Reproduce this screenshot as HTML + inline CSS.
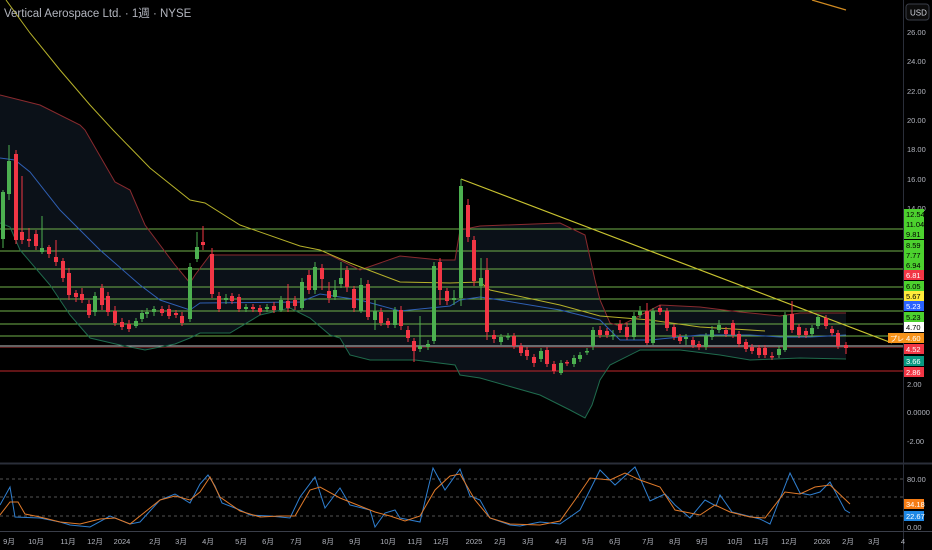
<!DOCTYPE html>
<html><head><meta charset="utf-8"><style>
html,body{margin:0;padding:0;background:#000;}
body{width:932px;height:550px;overflow:hidden;position:relative;font-family:"Liberation Sans","Noto Sans CJK JP",sans-serif;}
svg{position:absolute;left:0;top:0;}
text{font-family:"Liberation Sans","Noto Sans CJK JP",sans-serif;}
</style></head><body>
<svg id="s" width="932" height="550" viewBox="0 0 932 550" xmlns="http://www.w3.org/2000/svg">
<rect width="932" height="550" fill="#000"/>
<g id="bg"></g>
<g id="c"></g>
<g id="ov"></g>
</svg>
<script>
var NS="http://www.w3.org/2000/svg";
function el(p,t,a,txt){var e=document.createElementNS(NS,t);for(var k in a)e.setAttribute(k,a[k]);if(txt!=null)e.textContent=txt;document.getElementById(p).appendChild(e);return e;}
function pl(pts){return pts.map(function(p){return p[0]+","+p[1]}).join(" ");}
var upper=[[0,95],[40,105],[80,125],[85,130],[115,182],[130,190],[145,225],[175,265],[190,283],[195,275],[210,255],[300,255],[330,255],[360,270],[400,256],[440,260],[455,260],[460,230],[480,226],[560,223],[585,235],[595,280],[600,300],[610,323],[620,326],[660,305],[700,307],[740,312],[780,316],[800,313],[846,313]];
var lower=[[0,223],[10,227],[20,250],[50,285],[70,315],[90,338],[120,345],[145,350],[175,344],[190,338],[200,333],[230,333],[260,315],[290,308],[310,318],[330,335],[340,338],[350,355],[370,360],[415,360],[455,365],[460,375],[480,378],[540,395],[570,410],[585,418],[592,405],[600,380],[610,365],[640,350],[680,350],[720,355],[750,360],[800,358],[846,359]];
el("bg","polygon",{points:pl(upper.concat(lower.slice().reverse())),fill:"#0b1118"});
[229,251,269,287,299,311,324,336].forEach(function(y){el("bg","line",{x1:0,y1:y,x2:903,y2:y,stroke:"#6fb04a","stroke-width":1});});
el("bg","line",{x1:0,y1:346,x2:903,y2:346,stroke:"#c9c9c9","stroke-width":1});
el("bg","line",{x1:0,y1:347.5,x2:903,y2:347.5,stroke:"#5a1a1a","stroke-width":1});
el("bg","line",{x1:0,y1:371,x2:903,y2:371,stroke:"#c0272d","stroke-width":1});
el("bg","polyline",{points:pl(upper),fill:"none",stroke:"#8a2a2e","stroke-width":1});
el("bg","polyline",{points:pl(lower),fill:"none",stroke:"#1f6b4d","stroke-width":1});
el("bg","polyline",{points:pl([[0,158],[15,160],[30,172],[60,210],[100,250],[140,285],[160,300],[190,310],[200,303],[300,302],[320,294],[360,300],[400,311],[450,306],[460,300],[480,297],[500,300],[560,310],[600,320],[620,340],[650,340],[700,335],[750,335],[780,337],[810,337],[846,335]]),fill:"none",stroke:"#2f5fb3","stroke-width":1});
el("bg","polyline",{points:pl([[6,0],[30,33],[60,70],[90,105],[113,130],[150,168],[190,200],[205,203],[240,225],[300,246],[320,250],[350,263],[400,282],[450,283],[480,282],[490,290],[560,305],[600,316],[650,320],[700,327],[750,330],[765,331]]),fill:"none",stroke:"#b5b02a","stroke-width":1});
el("bg","line",{x1:461,y1:179,x2:892,y2:343,stroke:"#c8c230","stroke-width":1.2});
el("bg","line",{x1:812,y1:0,x2:846,y2:10,stroke:"#d08a20","stroke-width":1.2});
var C=[[3,239,192,190,248],[9,194,161,145,200],[16,154,240,150,244],[22,232,240,176,244],[29,239,241,228,247],[36,234,246,230,250],[42,252,248,216,254],[49,247,254,245,258],[56,257,262,240,266],[63,261,278,258,282],[69,273,295,268,300],[76,293,297,290,302],[82,294,300,288,303],[89,304,315,300,318],[95,312,296,292,316],[102,288,305,284,310],[108,296,312,292,316],[115,311,323,306,326],[122,322,327,318,330],[129,324,329,320,332],[136,326,321,318,328],[142,319,313,310,322],[147,314,312,308,318],[154,312,309,306,316],[162,309,313,306,316],[169,309,316,305,319],[176,313,315,310,318],[182,316,323,312,326],[190,319,267,263,322],[197,259,247,232,262],[203,242,245,226,250],[212,254,294,248,298],[219,296,309,292,312],[226,300,298,294,304],[232,296,301,293,304],[239,297,309,294,312],[246,309,307,304,312],[253,307,309,304,312],[260,308,312,305,315],[267,309,307,304,312],[274,306,310,302,313],[281,310,300,296,312],[288,301,308,284,312],[295,300,306,296,310],[302,308,282,278,310],[309,275,290,270,294],[315,290,267,262,294],[322,268,279,264,290],[329,291,298,282,303],[335,297,290,280,300],[341,284,278,262,288],[347,270,287,266,292],[354,289,308,286,312],[361,311,285,278,313],[368,284,317,280,320],[375,320,311,300,330],[381,312,323,308,326],[388,321,325,318,328],[395,325,310,307,328],[401,310,326,306,330],[408,330,338,326,342],[414,341,351,338,362],[420,349,346,316,352],[428,347,344,340,350],[434,341,266,262,344],[440,262,290,258,305],[447,291,301,288,305],[454,300,298,290,305],[461,298,186,179,306],[468,205,237,199,242],[474,240,281,236,286],[481,286,278,258,300],[487,270,332,258,340],[494,335,339,330,343],[501,342,337,334,345],[508,337,336,333,340],[514,336,346,333,349],[521,346,353,343,356],[527,350,356,347,360],[534,357,363,354,367],[541,359,351,348,362],[547,350,364,347,367],[554,364,371,361,374],[561,373,363,360,375],[567,362,363,360,366],[574,364,358,355,367],[580,359,355,352,362],[587,352,351,348,355],[593,346,330,327,350],[600,330,335,326,338],[607,331,335,328,338],[613,336,335,330,340],[620,324,330,320,333],[627,327,337,323,340],[634,337,316,312,340],[640,315,311,306,318],[647,311,343,303,345],[653,343,311,308,345],[660,308,312,305,315],[667,311,328,308,331],[674,327,337,324,340],[680,337,341,334,344],[686,339,337,334,345],[693,340,345,337,348],[699,344,347,341,350],[706,347,336,333,350],[712,337,330,326,340],[719,330,325,320,333],[726,330,334,327,337],[733,323,335,320,338],[739,334,344,331,347],[746,342,349,339,352],[752,347,351,344,354],[759,348,355,345,358],[765,348,355,345,358],[772,356,357,352,360],[779,355,349,346,358],[785,350,315,312,352],[792,314,330,301,333],[799,327,335,324,338],[806,331,335,328,338],[812,334,328,325,337],[818,326,317,314,329],[826,318,326,315,329],[832,329,333,326,336],[838,333,346,330,349],[846,345,348,342,354]];
C.forEach(function(c){var g=c[2]<c[1];var col=g?"#4cb050":"#f23645";
el("c","line",{x1:c[0],y1:c[3],x2:c[0],y2:c[4],stroke:col,"stroke-width":1});
var t=Math.min(c[1],c[2]),h=Math.max(1.5,Math.abs(c[1]-c[2]));el("c","rect",{x:c[0]-2,y:t,width:4,height:h,fill:col});});
el("ov","line",{x1:903.5,y1:0,x2:903.5,y2:550,stroke:"#2a2e39","stroke-width":1});
el("ov","line",{x1:0,y1:463.5,x2:932,y2:463.5,stroke:"#2a2e39","stroke-width":2});
el("ov","line",{x1:0,y1:531.5,x2:932,y2:531.5,stroke:"#3a3e49","stroke-width":1});
el("ov","text",{x:4,y:17,fill:"#b2b5be","font-size":11.5},"Vertical Aerospace Ltd. · 1週 · NYSE");
el("ov","rect",{x:906,y:4,width:23,height:16,rx:3,fill:"#0c0c0c",stroke:"#3a3e49"});
el("ov","text",{x:910,y:15.5,fill:"#d1d4dc","font-size":8},"USD");
[["26.00",32],["24.00",61],["22.00",91],["20.00",120],["18.00",149],["16.00",179],["14.00",208],["2.00",384],["0.0000",412],["-2.00",441],["80.00",479],["0.00",527]].forEach(function(p){el("ov","text",{x:907,y:p[1]+3,fill:"#b2b5be","font-size":7.5},p[0]);});
var L=[["12.54",214,"#4cd12e","#000"],["11.04",224,"#4cd12e","#000"],["9.81",234,"#4cd12e","#000"],["8.59",245,"#4cd12e","#000"],["7.77",255,"#4cd12e","#000"],["6.94",265,"#4cd12e","#000"],["6.81",275,"#f23645","#fff"],["6.05",286,"#4cd12e","#000"],["5.67",296,"#ffeb3b","#000"],["5.23",306,"#2962ff","#fff"],["5.23",317,"#4cd12e","#000"],["4.70",327,"#ffffff","#000"],["4.60",338,"#f7931a","#fff"],["4.52",349,"#f23645","#fff"],["3.66",361,"#089981","#fff"],["2.86",372,"#f23645","#fff"],["34.18",504,"#f57c14","#fff"],["22.67",516,"#1e88e5","#fff"]];
L.forEach(function(l){el("ov","rect",{x:904,y:l[1]-5,width:20,height:10,fill:l[2]});el("ov","text",{x:906,y:l[1]+3,fill:l[3],"font-size":7.5},l[0]);});
el("ov","rect",{x:888,y:333,width:16,height:10,fill:"#f7931a"});
el("ov","text",{x:890,y:341,fill:"#fff","font-size":7},"プレ");
[479,497,516].forEach(function(y){el("ov","line",{x1:0,y1:y,x2:903,y2:y,stroke:"#555","stroke-width":1,"stroke-dasharray":"3,3"});});
el("ov","polyline",{points:pl([[0,505],[10,487],[15,517],[40,518],[60,522],[70,525],[90,527],[110,516],[130,524],[140,522],[160,500],[175,494],[190,503],[200,484],[208,475],[215,486],[222,503],[240,510],[250,515],[270,516],[290,518],[300,497],[315,477],[325,508],[340,488],[350,505],[370,510],[375,527],[385,513],[395,510],[400,518],[410,520],[420,522],[433,468],[445,490],[460,469],[470,496],[480,500],[490,518],[510,525],[520,526],[540,522],[560,524],[580,510],[600,470],[615,485],[635,467],[640,478],[650,501],[665,494],[675,505],[690,518],[705,500],[716,506],[720,495],[732,512],[760,519],[770,524],[790,473],[800,493],[810,495],[820,492],[830,482],[845,510],[850,513]]),fill:"none",stroke:"#2f7fd0","stroke-width":1});
el("ov","polyline",{points:pl([[0,515],[10,502],[18,502],[25,514],[40,517],[60,522],[80,524],[100,519],[115,518],[130,524],[160,500],[175,496],[190,500],[200,492],[210,477],[220,497],[240,511],[260,517],[280,516],[295,516],[310,490],[320,487],[340,498],[360,506],[375,512],[390,516],[405,521],[420,516],[435,490],[450,476],[460,474],[475,500],[490,518],[510,524],[540,525],[560,521],[575,500],[590,478],[610,480],[625,473],[640,480],[660,487],[675,510],[700,515],[715,505],[730,512],[750,517],[765,518],[785,492],[800,494],[815,487],[830,485],[850,504]]),fill:"none",stroke:"#e07a2a","stroke-width":1});
[["9月",9],["10月",36],["11月",68],["12月",95],["2024",122],["2月",155],["3月",181],["4月",208],["5月",241],["6月",268],["7月",296],["8月",328],["9月",355],["10月",388],["11月",415],["12月",441],["2025",474],["2月",500],["3月",528],["4月",561],["5月",588],["6月",615],["7月",648],["8月",675],["9月",702],["10月",735],["11月",761],["12月",789],["2026",822],["2月",848],["3月",874],["4",903]].forEach(function(t){el("ov","text",{x:t[1],y:544,fill:"#b2b5be","font-size":7.5,"text-anchor":"middle"},t[0]);});
</script>
</body></html>
